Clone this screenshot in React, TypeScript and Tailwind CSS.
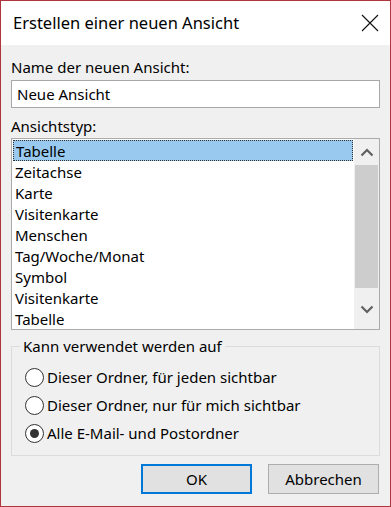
import { useState } from "react";

const items = [
  "Tabelle",
  "Zeitachse",
  "Karte",
  "Visitenkarte",
  "Menschen",
  "Tag/Woche/Monat",
  "Symbol",
  "Visitenkarte",
  "Tabelle",
];

const options = [
  "Dieser Ordner, für jeden sichtbar",
  "Dieser Ordner, nur für mich sichtbar",
  "Alle E-Mail- und Postordner",
];

function Radio({ checked }: { checked: boolean }) {
  return (
    <span className="flex h-[19px] w-[19px] shrink-0 items-center justify-center rounded-full border border-[#333333] bg-white">
      {checked && <span className="h-[9px] w-[9px] rounded-full bg-[#333333]" />}
    </span>
  );
}

export default function App() {
  const [name, setName] = useState("Neue Ansicht");
  const [selected, setSelected] = useState(0);
  const [scope, setScope] = useState(2);

  return (
    <div
      className="flex h-[507px] w-[391px] flex-col border border-[#b0353d] bg-[#f0f0f0] text-[15px] text-black"
      style={{ fontFamily: '"Noto Sans", "Open Sans", sans-serif' }}
    >
      {/* Title bar */}
      <div className="flex h-[44px] shrink-0 items-center justify-between bg-white pl-[12px] pr-[10px]">
        <span className="text-[16.5px] leading-none">Erstellen einer neuen Ansicht</span>
        <svg width="18" height="18" viewBox="0 0 18 18" className="mr-[1px]">
          <path d="M1 1L17 17M17 1L1 17" stroke="#111" strokeWidth="1.1" fill="none" />
        </svg>
      </div>

      <div className="flex flex-1 flex-col px-[10px] pt-[12px]">
        <label className="leading-[20px]">Name der neuen Ansicht:</label>
        <input
          value={name}
          onChange={(e) => setName(e.target.value)}
          className="mt-[3px] h-[28px] w-full border border-[#a8a8a8] bg-white px-[5px] text-[15px] outline-none"
        />

        <div className="mt-[8px] leading-[20px]">Ansichtstyp:</div>
        <div className="mt-[2px] flex h-[192px] border border-[#ababab] bg-white">
          <div className="flex-1 pt-[1px] pl-[1px] pr-[1px]">
            {items.map((it, i) => (
              <div
                key={i}
                onClick={() => setSelected(i)}
                className={`h-[21px] px-[2px] leading-[20px] ${
                  selected === i ? "border border-dotted border-[#333] bg-[#99c9ef] px-[1px] leading-[18px] h-[20px] mb-[1px]" : ""
                }`}
              >
                {it}
              </div>
            ))}
          </div>
          <div className="flex w-[25px] shrink-0 flex-col bg-[#f0f0f0]">
            <div className="flex h-[26px] items-center justify-center">
              <svg width="14" height="9" viewBox="0 0 14 9">
                <path d="M1.5 7.5L7 2L12.5 7.5" stroke="#606060" strokeWidth="2.2" fill="none" />
              </svg>
            </div>
            <div className="mx-[1px] h-[123px] bg-[#cdcdcd]" />
            <div className="flex flex-1 items-center justify-center pt-[2px]">
              <svg width="14" height="9" viewBox="0 0 14 9">
                <path d="M1.5 1.5L7 7L12.5 1.5" stroke="#606060" strokeWidth="2.2" fill="none" />
              </svg>
            </div>
          </div>
        </div>

        <fieldset className="mt-[7px] h-[119px] border border-[#dcdcdc] px-[13px] pb-0">
          <legend className="ml-[-5px] px-[3px] leading-[18px]">Kann verwendet werden auf</legend>
          <div className="mt-[13px] flex flex-col gap-[9px]">
            {options.map((o, i) => (
              <div key={i} className="flex h-[19px] items-center gap-[3px]" onClick={() => setScope(i)}>
                <Radio checked={scope === i} />
                <span className="leading-none">{o}</span>
              </div>
            ))}
          </div>
        </fieldset>

        <div className="mt-[8px] flex justify-end gap-[16px] pr-[1px]">
          <button className="h-[30px] w-[111px] border-2 border-[#0078d7] bg-[#e1e1e1] text-[15px]">OK</button>
          <button className="h-[30px] w-[111px] border border-[#adadad] bg-[#e1e1e1] text-[15px]">Abbrechen</button>
        </div>
      </div>
    </div>
  );
}
